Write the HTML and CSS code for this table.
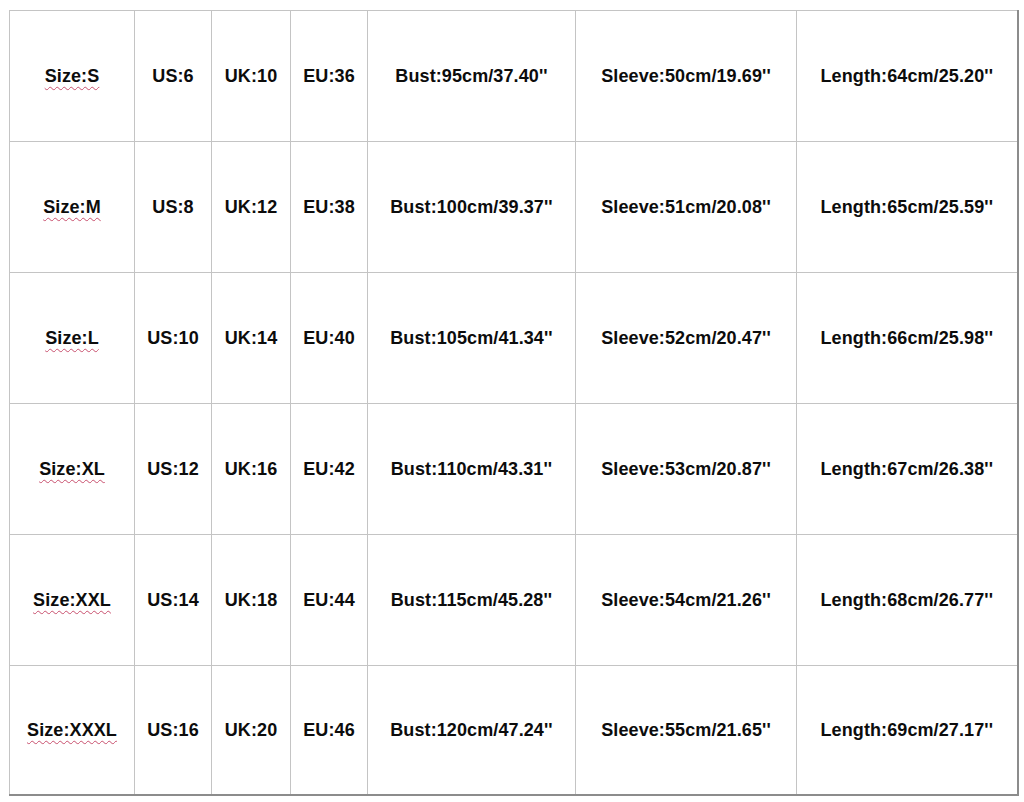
FILE: index.html
```html
<!DOCTYPE html>
<html>
<head>
<meta charset="utf-8">
<link rel="stylesheet" href="styles.css">
</head>
<body>
<table class="chart">
  <colgroup>
    <col class="c-size"><col class="c-us"><col class="c-uk"><col class="c-eu"><col class="c-bust"><col class="c-sleeve"><col class="c-len">
  </colgroup>
  <tbody>
    <tr><td><span class="sp">Size:S</span></td><td>US:6</td><td>UK:10</td><td>EU:36</td><td>Bust:95cm/37.40''</td><td>Sleeve:50cm/19.69''</td><td>Length:64cm/25.20''</td></tr>
    <tr><td><span class="sp">Size:M</span></td><td>US:8</td><td>UK:12</td><td>EU:38</td><td>Bust:100cm/39.37''</td><td>Sleeve:51cm/20.08''</td><td>Length:65cm/25.59''</td></tr>
    <tr><td><span class="sp">Size:L</span></td><td>US:10</td><td>UK:14</td><td>EU:40</td><td>Bust:105cm/41.34''</td><td>Sleeve:52cm/20.47''</td><td>Length:66cm/25.98''</td></tr>
    <tr><td><span class="sp">Size:XL</span></td><td>US:12</td><td>UK:16</td><td>EU:42</td><td>Bust:110cm/43.31''</td><td>Sleeve:53cm/20.87''</td><td>Length:67cm/26.38''</td></tr>
    <tr><td><span class="sp">Size:XXL</span></td><td>US:14</td><td>UK:18</td><td>EU:44</td><td>Bust:115cm/45.28''</td><td>Sleeve:54cm/21.26''</td><td>Length:68cm/26.77''</td></tr>
    <tr class="last"><td><span class="sp">Size:XXXL</span></td><td>US:16</td><td>UK:20</td><td>EU:46</td><td>Bust:120cm/47.24''</td><td>Sleeve:55cm/21.65''</td><td>Length:69cm/27.17''</td></tr>
  </tbody>
</table>
</body>
</html>
```

FILE: styles.css
```css
html, body {
  margin: 0;
  padding: 0;
  background: #fff;
}
body {
  padding: 10px 0 0 9px;
  font-family: "Liberation Sans", Arial, sans-serif;
}
.chart {
  border-collapse: collapse;
  table-layout: fixed;
  width: 1009px;
  border-top: 1px solid #c4c4c4;
  border-left: 1px solid #c4c4c4;
  border-right: 2px solid #8c8c8c;
  border-bottom: 2px solid #8c8c8c;
}
.c-size { width: 125px; }
.c-us { width: 77px; }
.c-uk { width: 79px; }
.c-eu { width: 77px; }
.c-bust { width: 208px; }
.c-sleeve { width: 221px; }
.c-len { width: 221px; }
.chart td {
  height: 130px;
  padding: 0;
  border: 1px solid #c4c4c4;
  text-align: center;
  vertical-align: middle;
  font-size: 18px;
  font-weight: bold;
  letter-spacing: 0.1px;
  color: #0c0c0c;
  white-space: nowrap;
}
.chart .last td {
  height: 128px;
}
.sp {
  text-decoration: underline wavy #c8506e;
  text-decoration-thickness: 1px;
  text-underline-offset: 4px;
}
```
